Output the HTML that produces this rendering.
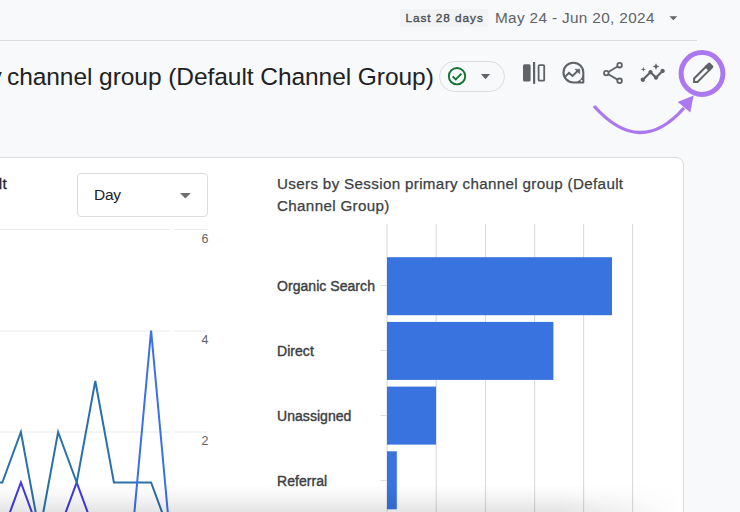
<!DOCTYPE html>
<html><head><meta charset="utf-8">
<style>
html,body{margin:0;padding:0;}
body{width:740px;height:512px;overflow:hidden;position:relative;background:#f8f9fa;font-family:"Liberation Sans",sans-serif;}
.abs{position:absolute;white-space:nowrap;line-height:1;}
#sep{position:absolute;left:0;top:40px;width:697px;height:1px;background:#dadce0;}
#chip28{position:absolute;left:400px;top:9px;width:88px;height:18px;background:#f1f3f4;}
#t28{left:405.5px;top:12.8px;font-size:11.8px;color:#4a4e52;-webkit-text-stroke:0.35px #4a4e52;letter-spacing:0.95px;}
#date{left:495px;top:9.5px;font-size:15.3px;letter-spacing:0.36px;color:#5f6368;}
#title{left:-10.5px;top:64.5px;font-size:24.5px;letter-spacing:-0.06px;color:#202124;}
#status{position:absolute;left:438.5px;top:61px;width:64px;height:29px;border:1px solid #dadce0;border-radius:16px;box-sizing:content-box;}
#card{position:absolute;left:-20px;top:157px;width:702px;height:400px;background:#fff;border:1px solid #dadce0;border-radius:8px;}
#daybox{position:absolute;left:77px;top:173px;width:129px;height:42px;border:1px solid #dadce0;border-radius:4px;background:#fff;}
#daytxt{left:94px;top:187px;font-size:15.5px;letter-spacing:-0.25px;color:#202124;}
.ylab{font-size:12.5px;color:#5f6368;}
#btitle{left:277px;top:173.4px;font-size:15.2px;letter-spacing:0.33px;color:#3c4043;-webkit-text-stroke:0.25px #3c4043;line-height:21.9px;white-space:normal;width:380px;}
.blab{font-size:14px;color:#3c4043;-webkit-text-stroke:0.4px #3c4043;letter-spacing:0.05px;}
#shade{position:absolute;left:0;top:484px;width:683px;height:28px;background:linear-gradient(to bottom,rgba(0,0,0,0) 0%,rgba(0,0,0,0.03) 40%,rgba(0,0,0,0.105) 100%);-webkit-mask-image:linear-gradient(to right,#000 0,#000 560px,rgba(0,0,0,0) 683px);}
</style></head>
<body>
<div id="sep"></div>
<div id="chip28"></div>
<div class="abs" id="t28">Last 28 days</div>
<div class="abs" id="date">May 24 - Jun 20, 2024</div>
<svg class="abs" style="left:0;top:0" width="740" height="512">
  <path d="M669.5 16.3 L677.2 16.3 L673.35 20.3 Z" fill="#5f6368"/>
</svg>
<div class="abs" id="title"><span style="margin-right:-1.5px">y</span> channel group (Default Channel Group)</div>
<div id="status"></div>

<div id="card"></div>
<div class="abs" style="left:-10px;top:176px;font-size:15.2px;letter-spacing:0.35px;color:#202124;-webkit-text-stroke:0.3px #202124;">ult</div>
<div id="daybox"></div>
<div class="abs" id="daytxt">Day</div>

<svg style="position:absolute;left:0;top:0" width="740" height="512">
  <!-- status chip -->
  <circle cx="457" cy="76.2" r="8.2" fill="none" stroke="#137333" stroke-width="1.9"/>
  <path d="M452.6 76.4 L455.7 79.4 L461.4 73.6" fill="none" stroke="#137333" stroke-width="1.9"/>
  <path d="M481 74 L490 74 L485.5 79.2 Z" fill="#5f6368"/>
  <path d="M180 193 L190.8 193 L185.4 198.4 Z" fill="#707070"/>
  <!-- columns icon -->
  <rect x="523" y="64.2" width="7.6" height="17.4" rx="1.6" fill="#5f6368"/>
  <rect x="533" y="62" width="2.2" height="21.8" fill="#5f6368"/>
  <rect x="538.6" y="65.1" width="5.6" height="15.6" rx="1" fill="none" stroke="#5f6368" stroke-width="1.8"/>
  <!-- insights bubble -->
  <path d="M583.3 82.5 H573.4 A9.9 9.9 0 1 1 583.3 72.6 Z" fill="none" stroke="#5f6368" stroke-width="2.1" stroke-linejoin="round"/>
  <path d="M583.3 72.6 A9.9 9.9 0 0 1 573.4 82.5 H583.3 Z" fill="#5f6368"/>
  <circle cx="581.5" cy="80.7" r="0.95" fill="#f8f9fa"/>
  <path d="M565.3 76.6 L569 72.9 L572.6 76 L577.8 70.8" fill="none" stroke="#5f6368" stroke-width="2"/>
  <path d="M575 69.2 L579.8 69.2 L579.8 74 Z" fill="#5f6368" stroke="#5f6368" stroke-width="0.5" stroke-linejoin="round"/>
  <!-- share -->
  <g fill="none" stroke="#5f6368" stroke-width="1.8">
    <circle cx="619.6" cy="65.2" r="2.3"/>
    <circle cx="606.3" cy="73.1" r="2.3"/>
    <circle cx="619.6" cy="80.8" r="2.3"/>
    <path d="M608.4 71.9 L617.5 66.4 M608.4 74.3 L617.5 79.6"/>
  </g>
  <!-- insights sparkle -->
  <g transform="translate(639.5,60) scale(1.1)" fill="#5f6368">
    <path d="M21 8c-1.45 0-2.26 1.44-1.93 2.51l-3.55 3.56c-.3-.09-.74-.09-1.04 0l-2.55-2.55C12.270 10.45 11.46 9 10 9c-1.45 0-2.270 1.44-1.93 2.52l-4.560 4.55C2.440 15.74 1 16.55 1 18c0 1.1.9 2 2 2 1.45 0 2.26-1.44 1.93-2.51l4.55-4.56c.3.09.74.09 1.04 0l2.55 2.55C12.73 16.55 13.54 18 15 18c1.45 0 2.27-1.44 1.93-2.52l3.56-3.55c1.07.33 2.51-.48 2.51-1.93 0-1.1-.9-2-2-2z"/>
    <path d="M15 9l.94-2.07L18 6l-2.06-.93L15 3l-.92 2.07L12 6l2.080.93z"/>
    <path d="M3.5 11L4 9l2-.5L4 8l-.5-2L3 8l-2 .5L3 9z"/>
  </g>
  <!-- pencil -->
  <g transform="translate(703,73) rotate(-45)" fill="none" stroke="#5f6368" stroke-width="2" stroke-linejoin="miter">
    <path d="M-12.6 0 L-10.2 -2.4 L6.5 -2.4 L6.5 2.4 L-10.2 2.4 Z"/>
    <path d="M6 -3.4 L10.4 -3.4 Q12.2 -3.4 12.2 -1.6 L12.2 1.6 Q12.2 3.4 10.4 3.4 L6 3.4 Z" fill="#5f6368" stroke="none"/>
  </g>
  <!-- purple circle + arrow -->
  <circle cx="702" cy="73.5" r="20.9" fill="none" stroke="#ac78f2" stroke-width="5"/>
  <path d="M594 106 Q640 158 684 108" fill="none" stroke="#ac78f2" stroke-width="3.3" stroke-linecap="butt"/>
  <path d="M693.6 95.5 L677.7 102 L690.3 112.6 Z" fill="#ac78f2"/>

  <!-- line chart gridlines -->
  <g stroke="#e8eaed" stroke-width="1">
    <path d="M0 229.5 H169.7 M174.4 229.5 H207"/>
    <path d="M0 331 H169.7 M174.4 331 H207"/>
    <path d="M0 432 H169.7 M174.4 432 H207"/>
  </g>
  <!-- lines -->
  <g fill="none" stroke-width="2" stroke-linejoin="miter">
    <polyline stroke="#4338e6" points="-16.3,533 2.3,533 20.9,482.5 39.5,533 58.1,533 76.7,482.5 95.3,533 113.9,533"/>
    <polyline stroke="#2a70aa" points="-16.3,482.5 2.3,482.5 20.9,432 39.5,533 58.1,432 76.7,482.5 95.3,381 113.9,482.5 132.5,482.5 151.1,482.5 169.7,533"/>
    <polyline stroke="#3a6fea" points="113.9,533 132.5,533 151.1,330.5 169.7,533 188.3,533"/>
  </g>
  <!-- bar chart gridlines -->
  <g stroke="#dadce0" stroke-width="1.15">
    <path d="M387 224 V512 M436.2 224 V512 M485.5 224 V512 M534.6 224 V512 M583.6 224 V512 M632.6 224 V512"/>
    <path d="M380.6 285.5 H387 M380.6 350.5 H387 M380.6 415.5 H387 M380.6 480.5 H387"/>
  </g>
  <g fill="#3973e0">
    <rect x="387" y="257.2" width="225" height="58"/>
    <rect x="387" y="321.9" width="166.4" height="58"/>
    <rect x="387" y="386.6" width="49" height="58"/>
    <rect x="387" y="451.3" width="9.8" height="58"/>
  </g>
</svg>
<div class="abs ylab" style="left:201.5px;top:233px;">6</div>
<div class="abs ylab" style="left:201.5px;top:334px;">4</div>
<div class="abs ylab" style="left:201.5px;top:435px;">2</div>
<div class="abs" id="btitle">Users by Session primary channel group (Default<br>Channel Group)</div>
<div class="abs blab" style="left:277px;top:279px;">Organic Search</div>
<div class="abs blab" style="left:277px;top:344px;">Direct</div>
<div class="abs blab" style="left:277px;top:409px;">Unassigned</div>
<div class="abs blab" style="left:277px;top:474px;">Referral</div>
<div id="shade"></div>
</body></html>
